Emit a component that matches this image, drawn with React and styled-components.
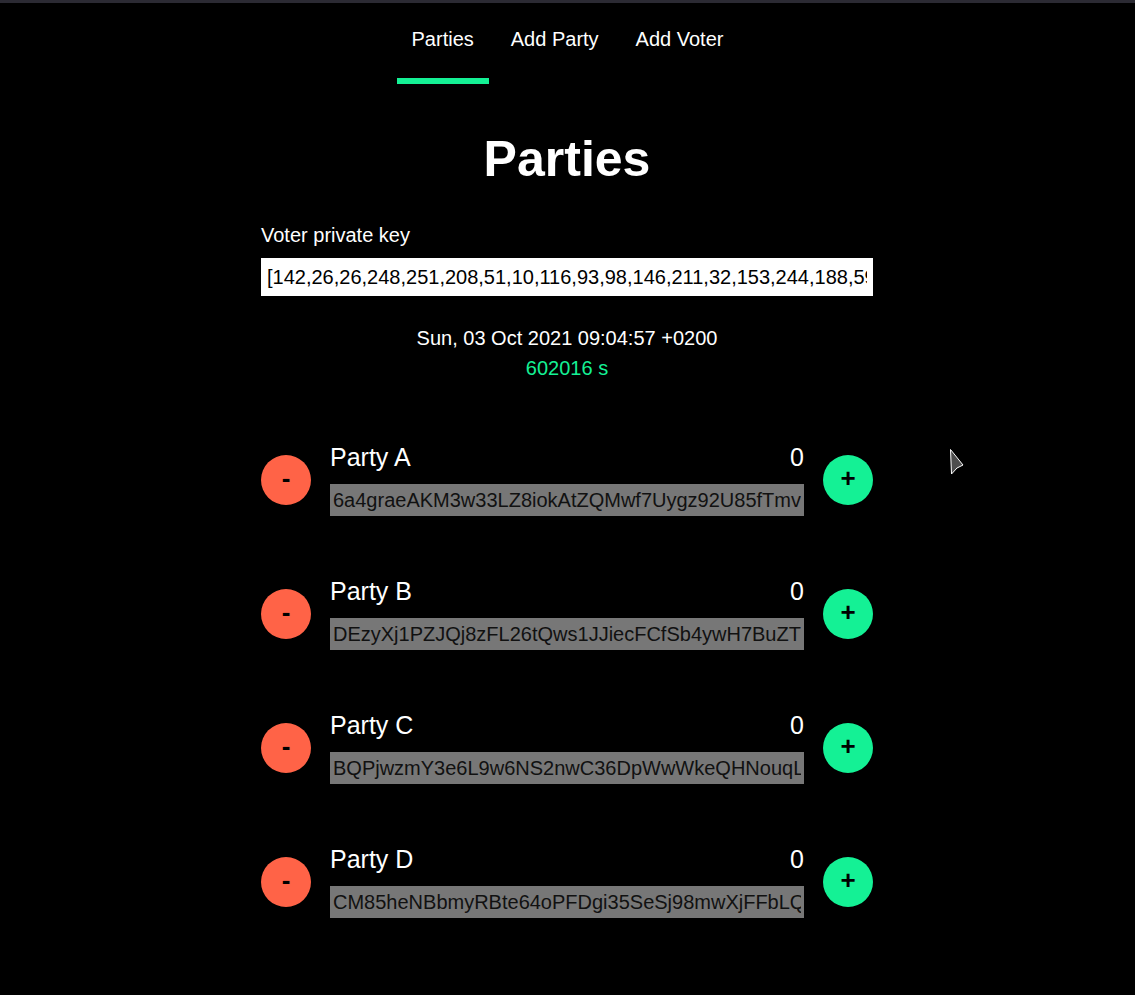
import React, { useState } from "react"
import styled, { createGlobalStyle } from "styled-components"

const GlobalStyle = createGlobalStyle`
  body {
    margin: 0;
    background: #000;
    color: #fff;
    font-family: "Liberation Sans", Arial, sans-serif;
  }
`

const Page = styled.div`
  position: relative;
  min-height: 100vh;
  border-top: 3px solid #2b2a33;
  box-sizing: border-box;
`

const Nav = styled.nav`
  display: flex;
  justify-content: center;
  gap: 7px;
  padding-top: 24px;
`

const Tab = styled.a`
  padding: 0 15px 27px;
  font-size: 20px;
  line-height: 24px;
  color: #fff;
  cursor: pointer;
  border-bottom: 6px solid ${p => (p.$active ? "#14f195" : "transparent")};
`

const Main = styled.main`
  width: 612px;
  margin-left: calc(50% - 306.5px);
`

const Title = styled.h1`
  margin: 45px 0 0;
  font-size: 50px;
  line-height: 60px;
  font-weight: 700;
  text-align: center;
`

const Label = styled.label`
  display: block;
  margin-top: 34px;
  font-size: 20px;
  line-height: 24px;
`

const KeyInput = styled.input`
  display: block;
  margin-top: 11px;
  width: 100%;
  height: 38px;
  box-sizing: border-box;
  border: none;
  outline: none;
  padding: 0 6px;
  background: #fff;
  color: #000;
  font-family: inherit;
  font-size: 20px;
`

const Clock = styled.div`
  margin-top: 27px;
  text-align: center;
  font-size: 20px;
  line-height: 30px;
`

const Countdown = styled.div`
  color: #14f195;
`

const PartyList = styled.div`
  display: flex;
  flex-direction: column;
  gap: 61px;
  margin-top: 60px;
  padding-bottom: 60px;
`

const PartyRow = styled.div`
  display: flex;
  align-items: center;
  gap: 19px;
`

const RoundButton = styled.button`
  flex: none;
  width: 50px;
  height: 50px;
  border: none;
  border-radius: 50%;
  padding: 0 0 3px;
  background: ${p => p.$bg};
  color: #000;
  font-family: inherit;
  font-size: 26px;
  font-weight: 700;
  line-height: 1;
  cursor: pointer;
`

const PartyInfo = styled.div`
  flex: 1;
  min-width: 0;
`

const PartyHeader = styled.div`
  display: flex;
  justify-content: space-between;
  font-size: 25px;
  line-height: 28px;
`

const AddressInput = styled.input`
  display: block;
  margin-top: 13px;
  width: 100%;
  height: 32px;
  box-sizing: border-box;
  border: none;
  outline: none;
  padding: 0 3px;
  background: #777;
  color: #111;
  font-family: inherit;
  font-size: 20px;
`

const Pointer = styled.svg`
  position: absolute;
  left: 949px;
  top: 445px;
  pointer-events: none;
`

const parties = [
  { name: "Party A", votes: 0, address: "6a4graeAKM3w33LZ8iokAtZQMwf7Uygz92U85fTmvQxNe" },
  { name: "Party B", votes: 0, address: "DEzyXj1PZJQj8zFL26tQws1JJiecFCfSb4ywH7BuZTkq" },
  { name: "Party C", votes: 0, address: "BQPjwzmY3e6L9w6NS2nwC36DpWwWkeQHNouqLr8sT2" },
  { name: "Party D", votes: 0, address: "CM85heNBbmyRBte64oPFDgi35SeSj98mwXjFFbLQvA7" },
]

const privateKey =
  "[142,26,26,248,251,208,51,10,116,93,98,146,211,32,153,244,188,59,201,77,14,3,222,90,61,180,12,45,67,89,101,233]"

export default function App() {
  const [active, setActive] = useState("Parties")

  return (
    <Page>
      <GlobalStyle />
      <Nav>
        {["Parties", "Add Party", "Add Voter"].map(t => (
          <Tab key={t} $active={active === t} onClick={() => setActive(t)}>
            {t}
          </Tab>
        ))}
      </Nav>
      <Main>
        <Title>Parties</Title>
        <Label htmlFor="voter-key">Voter private key</Label>
        <KeyInput id="voter-key" defaultValue={privateKey} />
        <Clock>
          <div>Sun, 03 Oct 2021 09:04:57 +0200</div>
          <Countdown>602016 s</Countdown>
        </Clock>
        <PartyList>
          {parties.map(party => (
            <PartyRow key={party.name}>
              <RoundButton $bg="#ff6347">-</RoundButton>
              <PartyInfo>
                <PartyHeader>
                  <span>{party.name}</span>
                  <span>{party.votes}</span>
                </PartyHeader>
                <AddressInput readOnly value={party.address} />
              </PartyInfo>
              <RoundButton $bg="#14f195">+</RoundButton>
            </PartyRow>
          ))}
        </PartyList>
      </Main>
      <Pointer width="16" height="28" viewBox="0 0 16 28">
        <path
          d="M1.5 1.5 L2.5 26 L8 20 L14 17 Z"
          fill="#4d4d4d"
          stroke="#fff"
          strokeWidth="1"
          strokeLinejoin="round"
        />
      </Pointer>
    </Page>
  )
}
